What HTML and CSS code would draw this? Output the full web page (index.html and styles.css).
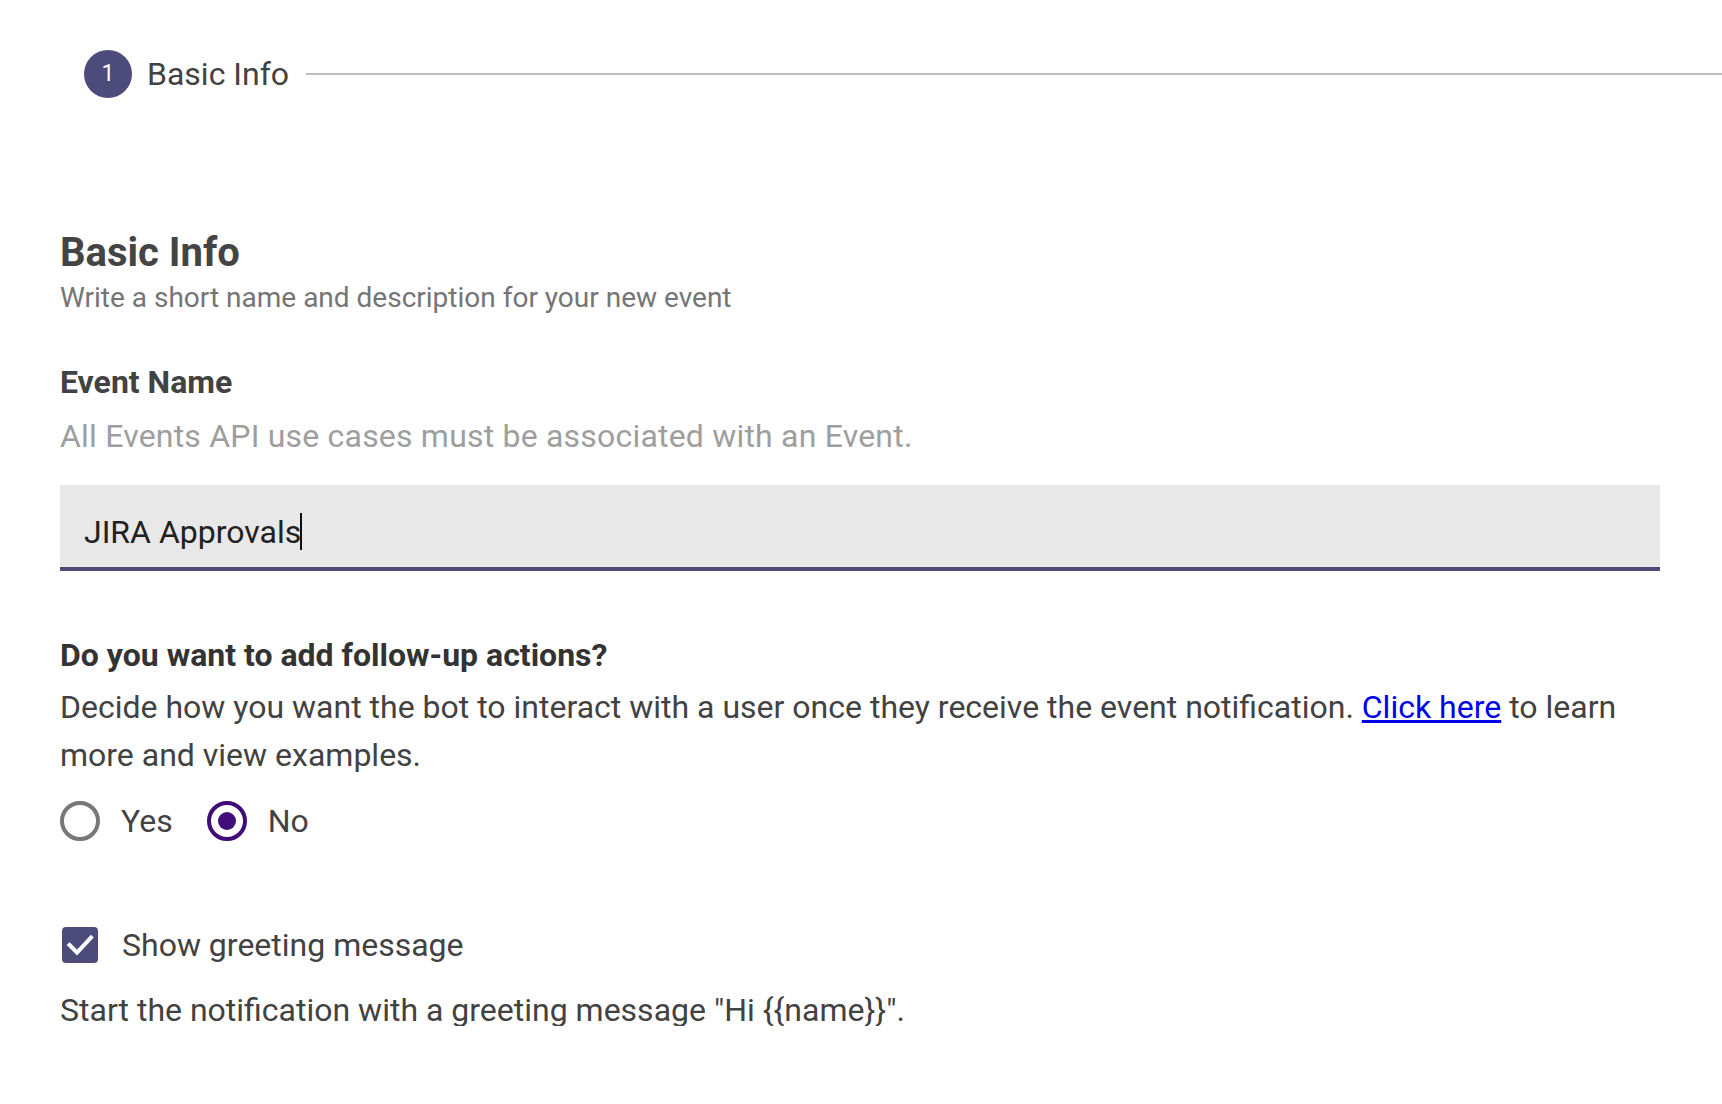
FILE: index.html
```html
<!DOCTYPE html>
<html lang="en">
<head>
<meta charset="utf-8">
<title>Basic Info</title>
<link rel="stylesheet" href="styles.css">
</head>
<body>
<div class="stepper">
  <div class="step-circle">1</div>
  <div class="step-label">Basic Info</div>
  <div class="step-line"></div>
</div>
<main class="form">
  <h1 class="title">Basic Info</h1>
  <p class="subtitle">Write a short name and description for your new event</p>

  <div class="field-label">Event Name</div>
  <p class="hint">All Events API use cases must be associated with an Event.</p>
  <div class="input"><span class="input-text">JIRA Approvals</span><span class="caret"></span></div>

  <div class="question">Do you want to add follow-up actions?</div>
  <p class="body-text">Decide how you want the bot to interact with a user once they receive the event notification. <a href="#" class="link">Click here</a> to learn more and view examples.</p>
  <div class="radios">
    <label class="radio-option"><span class="radio"></span><span class="radio-label">Yes</span></label>
    <label class="radio-option"><span class="radio radio-on"><span class="radio-dot"></span></span><span class="radio-label">No</span></label>
  </div>

  <label class="check-row">
    <span class="checkbox"><svg width="36" height="36" viewBox="0 0 36 36"><polyline points="7.5,18 15,25.5 29,10.5" fill="none" stroke="#fff" stroke-width="4" stroke-linecap="square"/></svg></span>
    <span class="check-label">Show greeting message</span>
  </label>
  <p class="note">Start the notification with a greeting message "Hi {{name}}".</p>
</main>
</body>
</html>
```
FILE: styles.css
```css
html, body {
  margin: 0;
  padding: 0;
  background: #ffffff;
}
body {
  font-family: Roboto, "Noto Sans", Arial, sans-serif;
  color: #424242;
}
.stepper {
  display: flex;
  align-items: center;
  padding: 50px 0 0 84px;
  height: 48px;
}
.step-circle {
  width: 48px;
  height: 48px;
  border-radius: 50%;
  background: #4d4a7c;
  color: #fff;
  font-size: 23px;
  line-height: 48px;
  text-align: center;
  flex: none;
}
.step-label {
  margin-left: 15px;
  font-size: 32px;
  line-height: 32px;
  color: #424242;
  flex: none;
}
.step-line {
  flex: 1;
  height: 2px;
  background: #bdbdbd;
  margin-left: 17px;
}
.form {
  padding: 0 62px 0 60px;
}
.title {
  margin: 135px 0 0;
  font-size: 40px;
  line-height: 40px;
  font-weight: 700;
  color: #444444;
}
.subtitle {
  margin: 11px 0 0;
  font-size: 28px;
  line-height: 28px;
  color: #757575;
}
.field-label {
  margin-top: 54px;
  font-size: 32px;
  line-height: 32px;
  font-weight: 700;
  color: #424242;
}
.hint {
  margin: 22px 0 0;
  font-size: 32px;
  line-height: 32px;
  letter-spacing: 0.2px;
  color: #9e9e9e;
}
.input {
  margin-top: 33px;
  height: 82px;
  box-sizing: content-box;
  background: #e8e8e8;
  border-bottom: 4px solid #4d4a7c;
  padding: 0 24px;
  display: flex;
  align-items: flex-start;
}
.input-text {
  margin-top: 31px;
  font-size: 32px;
  line-height: 32px;
  color: #212121;
}
.caret {
  margin-top: 28px;
  margin-left: -1px;
  width: 2px;
  height: 37px;
  background: #111;
}
.question {
  margin-top: 68px;
  font-size: 32px;
  line-height: 32px;
  font-weight: 700;
  color: #333333;
}
.body-text {
  margin: 12px 0 0;
  font-size: 32px;
  line-height: 48px;
  color: #424242;
}
.link {
  color: #0000ee;
  text-decoration: underline;
}
.radios {
  margin-top: 22px;
  display: flex;
  align-items: center;
  height: 40px;
}
.radio-option {
  display: flex;
  align-items: center;
  margin-right: 34px;
}
.radio {
  width: 40px;
  height: 40px;
  box-sizing: border-box;
  border: 4px solid #777777;
  border-radius: 50%;
  display: flex;
  align-items: center;
  justify-content: center;
}
.radio-on {
  border-color: #3f0c78;
}
.radio-dot {
  width: 18px;
  height: 18px;
  border-radius: 50%;
  background: #3f0c78;
}
.radio-label {
  margin-left: 21px;
  font-size: 32px;
  line-height: 32px;
  color: #424242;
}
.check-row {
  margin-top: 86px;
  display: flex;
  align-items: center;
  height: 36px;
}
.checkbox {
  margin-left: 2px;
  width: 36px;
  height: 36px;
  border-radius: 4px;
  background: #4d4a7c;
  display: block;
}
.checkbox svg {
  display: block;
}
.check-label {
  margin-left: 24px;
  font-size: 32px;
  line-height: 32px;
  color: #424242;
}
.note {
  margin: 31px 0 0;
  font-size: 32px;
  line-height: 32px;
  color: #424242;
}
```
